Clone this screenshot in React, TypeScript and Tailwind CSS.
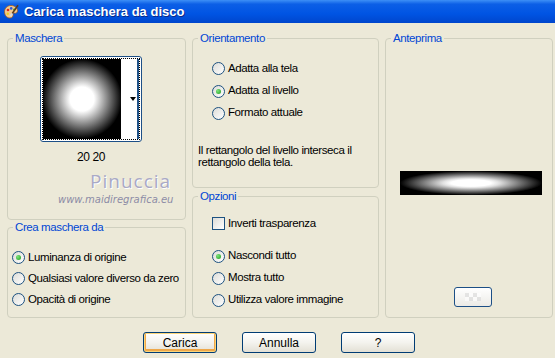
import type { ReactNode } from 'react';

function Radio({ checked, label }: { checked?: boolean; label: string }) {
  return (
    <div className="flex items-center gap-[3px] h-full">
      <span className="w-[13px] h-[13px] rounded-full border border-[#1c5180] bg-[linear-gradient(135deg,#dcdcd7,#ffffff)] flex items-center justify-center shrink-0">
        {checked && (
          <span className="w-[5px] h-[5px] rounded-full bg-[radial-gradient(circle_at_35%_35%,#7be57a,#1f9a1f)]" />
        )}
      </span>
      <span className="whitespace-nowrap">{label}</span>
    </div>
  );
}

function Group({ title, className, children }: { title: string; className: string; children: ReactNode }) {
  return (
    <fieldset className={`border border-[#d0d0bf] rounded-[4px] ${className}`}>
      <legend className="ml-[5px] px-[2px] leading-[14px] text-[#0046d5]">{title}</legend>
      {children}
    </fieldset>
  );
}

function XpButton({ label, isDefault }: { label: string; isDefault?: boolean }) {
  return (
    <button
      className={`w-[74px] h-[21px] rounded-[3px] border border-[#003c74] bg-[linear-gradient(180deg,#ffffff_0%,#f4f3ee_50%,#e3e0d5_100%)] ${
        isDefault ? 'shadow-[inset_0_0_0_1px_#fbd57a,inset_0_-1px_0_2px_#efa84a]' : ''
      }`}
    >
      {label}
    </button>
  );
}

export default function App() {
  return (
    <div className="w-[555px] h-[358px] bg-[#ece9d8] text-[11.5px] tracking-[-0.4px] text-black font-['Liberation_Sans',Arial,sans-serif] flex flex-col overflow-hidden">
      {/* Title bar */}
      <div className="h-[23px] flex items-center gap-[5px] pl-[3px] tracking-normal bg-[linear-gradient(180deg,#3d8ff6_0%,#0c5fe6_18%,#0054e3_60%,#0046cc_100%)]">
        <svg width="16" height="16" viewBox="0 0 16 16">
          <path d="M8 1.5c3.8 0 6.5 2.3 6.5 5.3 0 2.2-1.8 2.7-3 2.3-1-.3-1.8.3-1.5 1.3.4 1.4-.6 3.6-3 3.6C3.8 14 1.5 11.3 1.5 7.7 1.5 4.1 4.3 1.5 8 1.5z" fill="#f4c98e" stroke="#9a5a24" strokeWidth="0.8" />
          <circle cx="5" cy="6" r="1.3" fill="#e02a1a" />
          <circle cx="8.2" cy="4.4" r="1.3" fill="#2a5ce0" />
          <circle cx="11.3" cy="5.6" r="1.2" fill="#2fa83a" />
          <circle cx="4.8" cy="9.8" r="1.2" fill="#f0d020" />
          <path d="M15 1.2 8.6 10.4" stroke="#5a3a1a" strokeWidth="1.6" />
          <path d="M9.3 9.4 7.4 12.2" stroke="#d8d8d8" strokeWidth="2" />
        </svg>
        <span className="text-white font-bold text-[13px] [text-shadow:1px_1px_#0a2a8a]">
          Carica maschera da disco
        </span>
      </div>

      {/* Body */}
      <div className="flex pt-[8px] pl-[7px] gap-[6px]">
        {/* Column 1 */}
        <div className="flex flex-col w-[179px]">
          <Group title="Maschera" className="h-[189px]">
            <div className="ml-[32px] mt-[11px] w-[102px] flex flex-col items-center">
              <div className="w-[102px] h-[86px] rounded-[3px] border border-[#1c4f86] bg-white flex items-center px-[1px]">
                <div className="flex h-[82px] w-full border border-dotted border-black">
                  <svg width="78" height="80" viewBox="0 0 78 80" className="shrink-0">
                    <defs>
                      <radialGradient id="mg" cx="50%" cy="50%" r="50%">
                        <stop offset="0%" stopColor="#fff" />
                        <stop offset="30%" stopColor="#fff" />
                        <stop offset="40%" stopColor="#dcdcdc" />
                        <stop offset="100%" stopColor="#000" />
                      </radialGradient>
                    </defs>
                    <rect width="78" height="80" fill="#000" />
                    <circle cx="39" cy="40" r="40" fill="url(#mg)" />
                  </svg>
                  <div className="flex-1 flex items-center justify-end pr-[1px] border-r-2 border-[#1c4f86]">
                    <svg width="6" height="4" viewBox="0 0 6 4">
                      <path d="M0 0h6L3 4z" fill="#000" />
                    </svg>
                  </div>
                </div>
              </div>
              <div className="mt-[8px] leading-[14px] text-[12px]">20 20</div>
            </div>
            <div className="ml-[82px] mt-[7px] font-['Open_Sans',sans-serif] text-[19px] leading-[20px] tracking-[1px] text-[#a9a9c6] [text-shadow:1px_1px_#ffffff]">
              Pinuccia
            </div>
            <div className="ml-[50px] mt-[3px] font-['DejaVu_Sans',sans-serif] italic text-[10px] leading-[12px] tracking-normal text-[#8c8ca6]">
              www.maidiregrafica.eu
            </div>
          </Group>
          <Group title="Crea maschera da" className="h-[98px]">
            <div className="pl-[4px] pt-[13px] flex flex-col">
              <div className="h-[21px]"><Radio checked label="Luminanza di origine" /></div>
              <div className="h-[21px]"><Radio label="Qualsiasi valore diverso da zero" /></div>
              <div className="h-[21px]"><Radio label="Opacità di origine" /></div>
            </div>
          </Group>
        </div>

        {/* Column 2 */}
        <div className="flex flex-col w-[187px] gap-[1px]">
          <Group title="Orientamento" className="h-[157px]">
            <div className="pl-[19px] pt-[12px] flex flex-col">
              <div className="h-[23px]"><Radio label="Adatta alla tela" /></div>
              <div className="h-[22px]"><Radio checked label="Adatta al livello" /></div>
              <div className="h-[22px]"><Radio label="Formato attuale" /></div>
            </div>
            <p className="pl-[5px] mt-[20px] leading-[12px]">
              Il rettangolo del livello interseca il
              <br />
              rettangolo della tela.
            </p>
          </Group>
          <Group title="Opzioni" className="h-[129px]">
            <div className="pl-[19px] pt-[10px] flex flex-col">
              <div className="h-[21px] flex items-center gap-[3px]">
                <span className="w-[13px] h-[13px] border border-[#1c5180] bg-[linear-gradient(135deg,#dcdcd7,#ffffff)]" />
                <span>Inverti trasparenza</span>
              </div>
              <div className="h-[22px] mt-[11px]"><Radio checked label="Nascondi tutto" /></div>
              <div className="h-[22px]"><Radio label="Mostra tutto" /></div>
              <div className="h-[22px]"><Radio label="Utilizza valore immagine" /></div>
            </div>
          </Group>
        </div>

        {/* Column 3 */}
        <Group title="Anteprima" className="w-[168px] h-[287px]">
          <svg width="142" height="24" viewBox="0 0 142 24" className="ml-[14px] mt-[126px] block">
            <defs>
              <radialGradient id="pg" cx="50%" cy="50%" r="50%">
                <stop offset="0%" stopColor="#fff" />
                <stop offset="28%" stopColor="#fff" />
                <stop offset="40%" stopColor="#e0e0e0" />
                <stop offset="100%" stopColor="#000" />
              </radialGradient>
            </defs>
            <rect width="142" height="24" fill="#000" />
            <ellipse cx="71" cy="12" rx="71" ry="12" fill="url(#pg)" />
          </svg>
          <div className="ml-[68px] mt-[92px] w-[38px] h-[20px] rounded-[3px] border border-[#1c4f86] bg-[linear-gradient(180deg,#ffffff,#ecebe6)] flex items-center justify-center">
            <div className="grid grid-cols-4 w-[16px] h-[8px] opacity-60">
              <span className="bg-[#d8d8d8]" /><span className="bg-white" /><span className="bg-[#d8d8d8]" /><span className="bg-white" />
              <span className="bg-white" /><span className="bg-[#d8d8d8]" /><span className="bg-white" /><span className="bg-[#d8d8d8]" />
            </div>
          </div>
        </Group>
      </div>

      {/* Buttons */}
      <div className="flex pl-[143px] mt-[14px] gap-[25px] text-[12px] tracking-normal">
        <XpButton label="Carica" isDefault />
        <XpButton label="Annulla" />
        <XpButton label="?" />
      </div>
    </div>
  );
}
